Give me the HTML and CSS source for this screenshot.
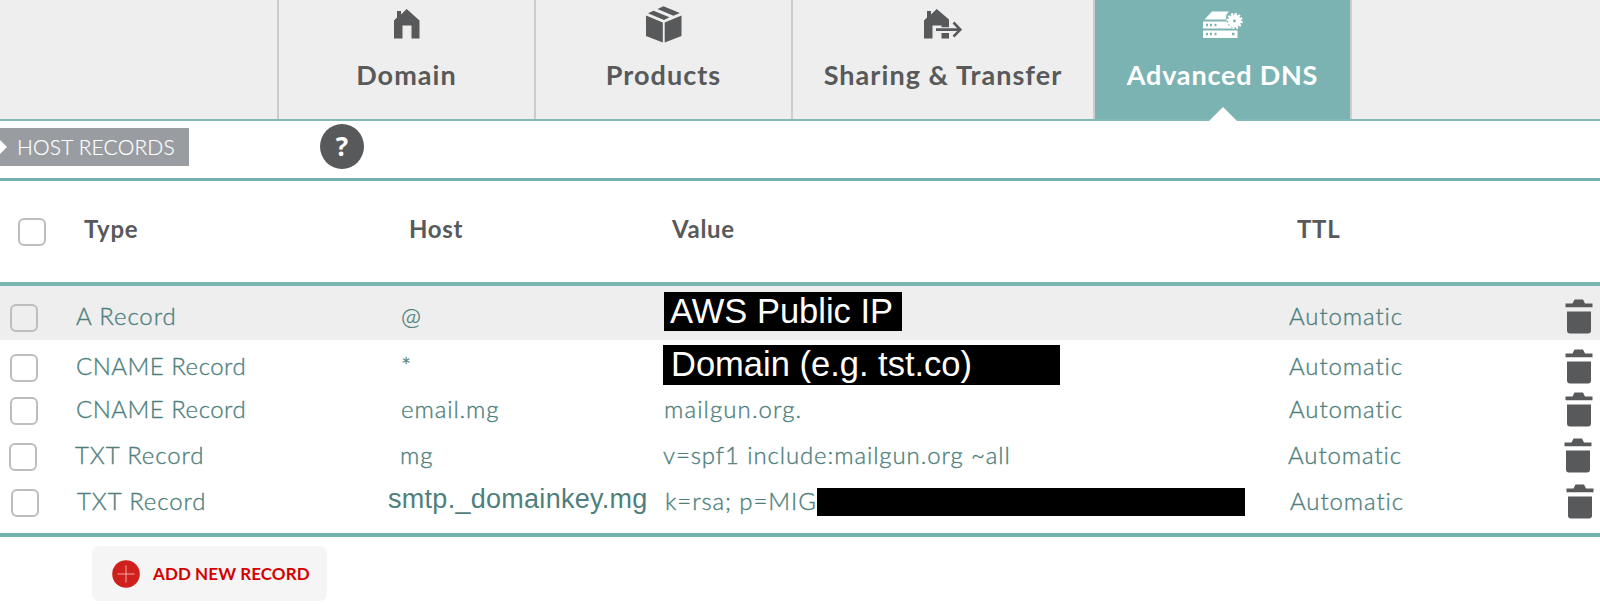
FILE: index.html
```
<!DOCTYPE html>
<html lang="en">
<head>
    <meta charset="UTF-8">
    <meta name="viewport" content="width=device-width, initial-scale=1.0">
    <title>Advanced DNS</title>
    <link rel="stylesheet" href="styles.css">
</head>
<body>
    <svg class="defs">
        <symbol id="trash" viewBox="0 0 28 35">
            <path d="M0.5 4.5H7.5L9.5 0.5H18L20 4.5H27.5V8.2H0.5ZM2 12.5H26V31.5Q26 34.5 23 34.5H5Q2 34.5 2 31.5Z"/>
        </symbol>
    </svg>

    <nav class="tabs">
        <a class="tab domain" href="#">
            <svg width="26" height="30" viewBox="0 0 26 30"><path d="M0 11.5L3 8.5V2H7V5.5L12.7 0L25.5 11.5V29.5H17.5V16.5H8.5V29.5H0Z"/></svg>
            <span>Domain</span>
        </a>
        <a class="tab products" href="#">
            <svg width="36" height="37" viewBox="0 0 36 37"><path d="M0 9.5L16.8 16.5V36.5L0 30ZM35.5 9.5L18.7 16.5V36.5L35.5 30ZM2 7.2L7.5 4.8L23.5 11.3L18 14ZM11.5 3L17.5 0.3L33.8 7L27.5 9.8Z"/></svg>
            <span>Products</span>
        </a>
        <a class="tab sharing" href="#">
            <svg width="38" height="30" viewBox="0 0 38 30"><path d="M0 11.5L3 8.5V2H7V5.5L12.7 0L25 10.5V18.3H17.5V16.5H8.5V29.5H0ZM17.5 24H25V29.5H17.5Z"/><path class="stroke" d="M12 20.6H36M29.5 13.5L36.3 20.6L29.5 27.5"/></svg>
            <span>Sharing &amp; Transfer</span>
        </a>
        <a class="tab dns active" href="#">
            <svg width="40" height="28" viewBox="0 0 40 28">
                <path fill-rule="evenodd" d="M9 0.5H26L23.5 3.5L22.8 8.5H1.5ZM0 10.5H23.5L25.5 14.5L30 17.5H0ZM3 12.7V15.3H5V12.7ZM7 12.7V15.3H9V12.7ZM11.5 12.7V15.3H13.5V12.7ZM0 19.5H34.5V27H0ZM3 21.7V24.3H5V21.7ZM7 21.7V24.3H9V21.7ZM11.5 21.7V24.3H13.5V21.7ZM29 21.7V24.3H31.5V21.7Z"/>
                <circle cx="31.5" cy="10" r="6.5"/>
                <circle class="teeth" cx="31.5" cy="10" r="6.7"/>
                <circle class="hole" cx="31.5" cy="10" r="1.4"/>
            </svg>
            <span>Advanced DNS</span>
        </a>
    </nav>

    <div class="section-bar">
        <h2 class="section-title">HOST RECORDS</h2>
        <button class="help">?</button>
    </div>

    <div class="records">
        <div class="row head">
            <i class="check"></i>
            <span class="type">Type</span>
            <span class="host">Host</span>
            <span class="value">Value</span>
            <span class="ttl">TTL</span>
        </div>
        <div class="row first">
            <i class="check"></i>
            <span class="type">A Record</span>
            <span class="host">@</span>
            <span class="value"><b class="mask ip">AWS Public IP</b></span>
            <span class="ttl">Automatic</span>
            <svg class="trash"><use href="#trash"/></svg>
        </div>
        <div class="row second">
            <i class="check"></i>
            <span class="type cname">CNAME Record</span>
            <span class="host">*</span>
            <span class="value"><b class="mask name">Domain (e.g. tst.co)</b></span>
            <span class="ttl">Automatic</span>
            <svg class="trash"><use href="#trash"/></svg>
        </div>
        <div class="row">
            <i class="check"></i>
            <span class="type cname">CNAME Record</span>
            <span class="host">email.mg</span>
            <span class="value mailgun">mailgun.org.</span>
            <span class="ttl">Automatic</span>
            <svg class="trash"><use href="#trash"/></svg>
        </div>
        <div class="row fourth">
            <i class="check"></i>
            <span class="type">TXT Record</span>
            <span class="host">mg</span>
            <span class="value">v=spf1 include:mailgun.org ~all</span>
            <span class="ttl">Automatic</span>
            <svg class="trash"><use href="#trash"/></svg>
        </div>
        <div class="row last">
            <i class="check"></i>
            <span class="type">TXT Record</span>
            <span class="host domainkey">smtp._domainkey.mg</span>
            <span class="value key"><span class="key-text">k=rsa; p=MIG</span><b class="mask blank"></b></span>
            <span class="ttl">Automatic</span>
            <svg class="trash"><use href="#trash"/></svg>
        </div>
    </div>

    <button class="add">
        <svg width="28" height="28" viewBox="0 0 28 28"><circle cx="14" cy="14" r="13.8"/><path d="M14 5.5V22.5M5.5 14H22.5"/></svg>
        <span>ADD NEW RECORD</span>
    </button>
</body>
</html>
```

FILE: styles.css
```
* {
    box-sizing: border-box;
}
body {
    margin: 0;
    height: 606px;
    overflow: hidden;
    background: #fff;
    font-family: Lato, "Open Sans", sans-serif;
    color: #58595b;
}
button {
    border: none;
    padding: 0;
    font-family: inherit;
}
.defs {
    display: none;
}

/* tabs */
.tabs {
    display: flex;
    height: 121px;
    padding-left: 277px;
    background: #eee;
    border-bottom: 2px solid #82bab7;
}
.tab {
    position: relative;
    display: flex;
    flex-direction: column;
    align-items: center;
    width: 257px;
    border-left: 2px solid #ccc;
    color: #58595b;
    fill: #58595b;
    font-size: 27px;
    font-weight: 700;
    letter-spacing: 1.05px;
    line-height: 32px;
    text-decoration: none;
    white-space: nowrap;
}
.tab svg {
    margin-top: 9px;
}
.tab span {
    margin-top: 20px;
}
.products svg {
    margin-top: 6px;
}
.products span {
    margin-top: 16px;
}
.sharing {
    width: 302px;
}
.dns {
    width: 259px;
    border-right: 2px solid #ccc;
    letter-spacing: 0.8px;
}
.dns svg {
    margin-top: 11px;
}
.active {
    background: #7bb3b2;
    color: #fff;
    fill: #fff;
}
.active::after {
    content: "";
    position: absolute;
    left: 114px;
    bottom: -2px;
    border: 14px solid transparent;
    border-top: none;
    border-bottom-color: #fff;
}
.stroke {
    fill: none;
    stroke: #58595b;
    stroke-width: 2.6;
}
.teeth {
    fill: none;
    stroke: #fff;
    stroke-width: 3;
    stroke-dasharray: 2 1.5;
}
.hole {
    fill: #7bb3b2;
}

/* section title */
.section-bar {
    display: flex;
    align-items: flex-start;
    height: 57px;
}
.section-title {
    position: relative;
    width: 189px;
    height: 38px;
    margin: 7px 131px 0 0;
    padding-left: 17px;
    background: #999ca1;
    color: #fff;
    font-size: 21px;
    font-weight: 300;
    letter-spacing: 0.15px;
    line-height: 37px;
    white-space: nowrap;
    -webkit-text-stroke: 0.2px #fff;
}
.section-title::before {
    content: "";
    position: absolute;
    left: 0;
    top: 12px;
    border: 7px solid transparent;
    border-left-color: #fff;
    border-right: none;
}
.help {
    width: 44px;
    height: 45px;
    margin-top: 3px;
    border-radius: 50%;
    background: #58595b;
    color: #fff;
    font-family: "Open Sans", sans-serif;
    font-size: 26px;
    font-weight: 700;
    line-height: 43px;
}

/* records */
.records {
    height: 359px;
    border-top: 3px solid #73b1ae;
    border-bottom: 4px solid #73b1ae;
}
.row {
    display: grid;
    grid-template-columns: 66px 325px 263px 625px 276px 28px;
    align-items: start;
    height: 46px;
    padding: 14px 0 0 10px;
    color: #4f7f7d;
    font-size: 24px;
    font-weight: 300;
    letter-spacing: 0.9px;
    line-height: 28px;
    white-space: nowrap;
}
.row > span {
    margin-top: -2px;
    -webkit-text-stroke: 0.35px currentColor;
}
.head {
    height: 105px;
    padding: 37px 0 0 18px;
    border-bottom: 4px solid #7cb6b3;
    color: #58595b;
    font-weight: 700;
    letter-spacing: 0.7px;
}
.head > span {
    margin-top: -3px;
    -webkit-text-stroke: 0;
}
.first {
    height: 54px;
    padding-top: 18px;
    background: #eee;
}
.second {
    height: 43px;
}
.fourth {
    padding-left: 9px;
}
.last {
    padding-left: 11px;
}
.check {
    width: 28px;
    height: 28px;
    border: 2px solid #bdbdbd;
    border-radius: 6px;
}
.cname {
    letter-spacing: 0.5px;
}
.mailgun {
    letter-spacing: 1.1px;
}
.trash {
    width: 28px;
    height: 35px;
    margin-top: -5px;
    fill: #58595b;
}
.mask {
    display: block;
    background: #000;
    color: #fff;
    font-family: "Liberation Sans", sans-serif;
    font-size: 34.5px;
    font-weight: 400;
    letter-spacing: 0;
    line-height: 39px;
    -webkit-text-stroke: 0;
}
.ip {
    width: 238px;
    height: 39px;
    margin-top: -10px;
    padding-left: 6px;
}
.name {
    width: 397px;
    height: 40px;
    margin: -7px 0 0 -1px;
    padding-left: 8px;
}
.row > .domainkey {
    margin: -4px 0 0 -14px;
    font-family: "Liberation Sans", sans-serif;
    font-size: 27px;
    font-weight: 400;
    letter-spacing: 0.28px;
    -webkit-text-stroke: 0;
}
.key {
    display: flex;
}
.key-text {
    width: 152px;
}
.blank {
    width: 428px;
    height: 28px;
    margin-top: 1px;
}

/* add button */
.add {
    display: flex;
    align-items: center;
    width: 235px;
    height: 55px;
    margin: 9px 0 0 92px;
    padding-left: 20px;
    border-radius: 7px;
    background: #f5f5f5;
    color: #d40000;
    font-size: 17px;
    font-weight: 700;
    letter-spacing: 0.08px;
}
.add svg {
    margin-right: 13px;
    fill: #d0201d;
    stroke: #f3a5a3;
    stroke-width: 1;
}
.add circle {
    stroke: none;
}
```
